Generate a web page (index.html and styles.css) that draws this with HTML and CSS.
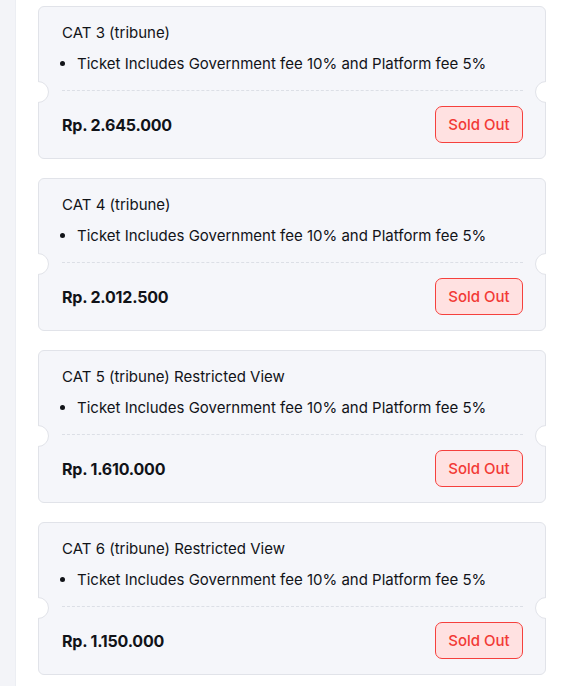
FILE: index.html
```html
<!DOCTYPE html>
<html lang="en">
<head>
    <meta charset="UTF-8">
    <meta name="viewport" content="width=device-width, initial-scale=1.0">
    <title>Tickets</title>
    <link rel="stylesheet" href="styles.css">
</head>
<body>
    <div class="layout">
        <div class="sidebar"></div>
        <div class="tickets">
            <div class="ticket">
                <div class="ticket-info">
                    <div class="ticket-name">CAT 3 (tribune)</div>
                    <ul class="ticket-notes">
                        <li>Ticket Includes Government fee 10% and Platform fee 5%</li>
                    </ul>
                </div>
                <div class="ticket-footer">
                    <div class="price">Rp. 2.645.000</div>
                    <button class="button sold-out" disabled>Sold Out</button>
                </div>
            </div>

            <div class="ticket">
                <div class="ticket-info">
                    <div class="ticket-name">CAT 4 (tribune)</div>
                    <ul class="ticket-notes">
                        <li>Ticket Includes Government fee 10% and Platform fee 5%</li>
                    </ul>
                </div>
                <div class="ticket-footer">
                    <div class="price">Rp. 2.012.500</div>
                    <button class="button sold-out" disabled>Sold Out</button>
                </div>
            </div>

            <div class="ticket">
                <div class="ticket-info">
                    <div class="ticket-name">CAT 5 (tribune) Restricted View</div>
                    <ul class="ticket-notes">
                        <li>Ticket Includes Government fee 10% and Platform fee 5%</li>
                    </ul>
                </div>
                <div class="ticket-footer">
                    <div class="price">Rp. 1.610.000</div>
                    <button class="button sold-out" disabled>Sold Out</button>
                </div>
            </div>

            <div class="ticket">
                <div class="ticket-info">
                    <div class="ticket-name">CAT 6 (tribune) Restricted View</div>
                    <ul class="ticket-notes">
                        <li>Ticket Includes Government fee 10% and Platform fee 5%</li>
                    </ul>
                </div>
                <div class="ticket-footer">
                    <div class="price">Rp. 1.150.000</div>
                    <button class="button sold-out" disabled>Sold Out</button>
                </div>
            </div>
        </div>
    </div>
</body>
</html>
```

FILE: styles.css
```css
body {
    margin: 0;
    font-family: Inter, "Noto Sans", sans-serif;
    color: #111318;
    background: white;
}
.layout {
    display: flex;
    min-height: 100vh;
}
.sidebar {
    width: 15px;
    flex-shrink: 0;
    background: #f3f4f8;
    border-right: 1px solid #eceef3;
}
.tickets {
    flex: 1;
    padding: 6px 27px 0 22px;
    display: flex;
    flex-direction: column;
    gap: 19px;
}
.ticket {
    position: relative;
    background: #f5f6fa;
    border: 1px solid #e1e3e9;
    border-radius: 6px;
}
/* punched holes on both sides of the tear line, only the inner half is drawn */
.ticket::before,
.ticket::after {
    content: "";
    position: absolute;
    top: 74px;
    width: 20px;
    height: 20px;
    border-radius: 50%;
    background: white;
    border: 1px solid #e1e3e9;
}
.ticket::before {
    left: -12px;
    clip-path: inset(-1px -1px -1px 11px);
}
.ticket::after {
    right: -12px;
    clip-path: inset(-1px 11px -1px -1px);
}
.ticket-info {
    margin: 0 22px 0 23px;
    padding: 15px 0 15px;
    border-bottom: 1px dashed #dcdfe6;
}
.ticket-name {
    font-size: 15px;
    line-height: 22px;
}
.ticket-notes {
    margin: 9px 0 0;
    padding-left: 15px;
    font-size: 15px;
    line-height: 22px;
}
.ticket-footer {
    display: flex;
    align-items: center;
    justify-content: space-between;
    padding: 15px 22px 15px 23px;
}
.price {
    font-size: 16px;
    font-weight: 700;
    letter-spacing: -0.2px;
}
.button {
    font-family: inherit;
    font-size: 15px;
    font-weight: 500;
    width: 88px;
    height: 37px;
    border-radius: 7px;
    cursor: pointer;
}
.sold-out {
    background: #ffe1e1;
    border: 1px solid #f5403d;
    color: #f23a36;
}
.sold-out:disabled {
    cursor: not-allowed;
}
```
